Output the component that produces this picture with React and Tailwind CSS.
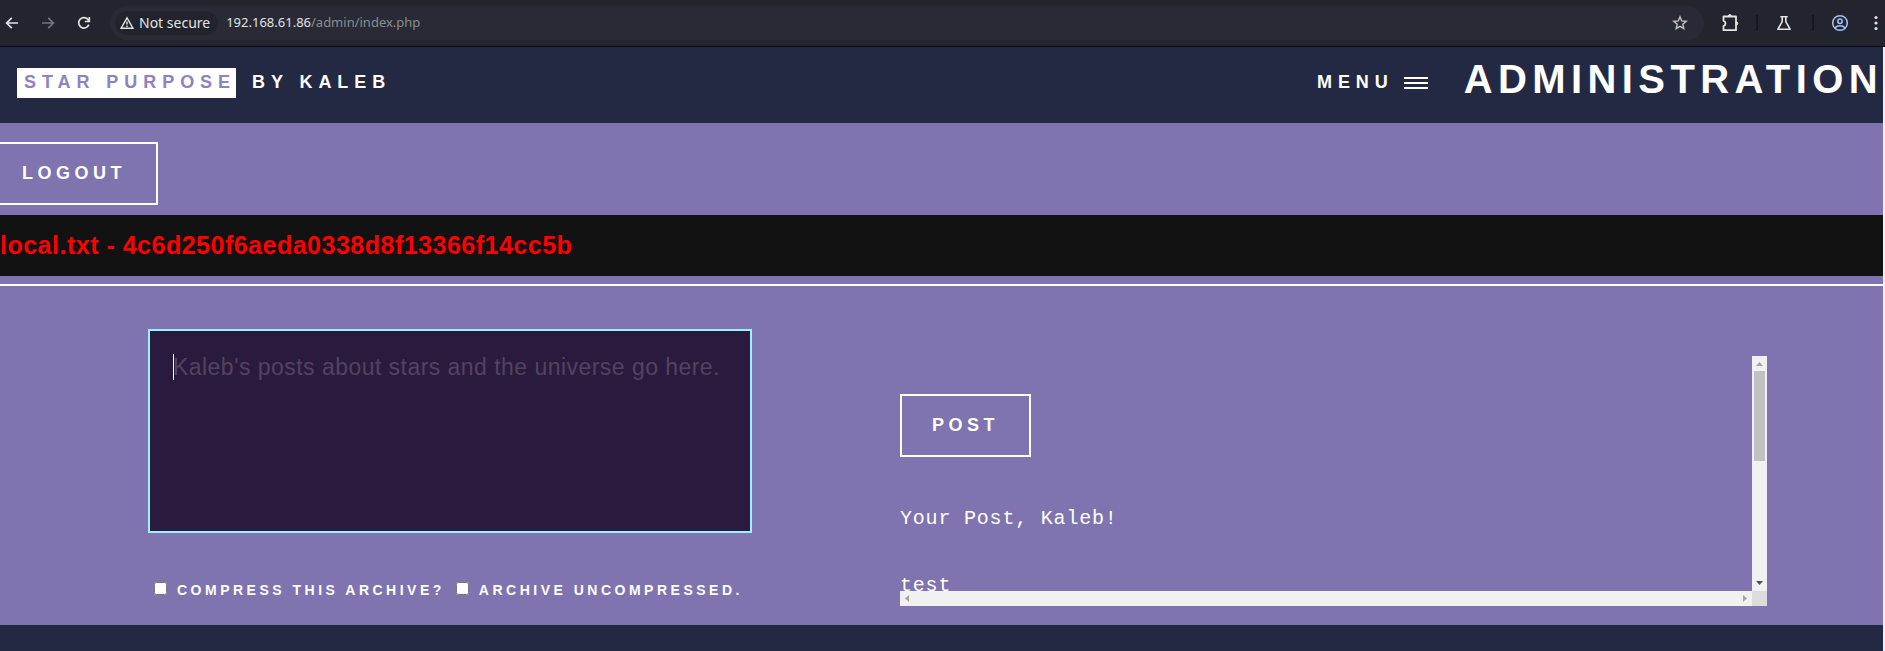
import { useState } from 'react';

const POSTS = ['Your Post, Kaleb!', 'test'];

function BackIcon({ flip }) {
  return (
    <svg viewBox="0 0 16 16" className="h-4 w-4" fill="none" stroke="currentColor" strokeWidth="1.7">
      <path d={flip ? 'M2 8h11M8.2 2.8 13.4 8l-5.2 5.2' : 'M14 8H3M7.8 2.8 2.6 8l5.2 5.2'} />
    </svg>
  );
}

function IconButton({ label, className = '', children }) {
  return (
    <button type="button" aria-label={label} className={`flex h-6 w-6 shrink-0 items-center justify-center ${className}`}>
      {children}
    </button>
  );
}

function BrowserBar() {
  return (
    <div className="flex h-[47px] items-center border-b border-[#0b0c10] bg-[#23252e] font-['Noto_Sans',sans-serif] text-[#e3e3e3]">
      <div className="flex items-center gap-3">
        <IconButton label="Back"><BackIcon /></IconButton>
        <IconButton label="Forward" className="text-[#73757c]"><BackIcon flip /></IconButton>
        <IconButton label="Reload">
          <svg viewBox="0 0 16 16" className="h-4 w-4" fill="none" stroke="currentColor" strokeWidth="1.7">
            <path d="M12.8 9.6A5.2 5.2 0 1 1 12.3 5l.9 1.2" />
            <path d="M13.3 2v4.5H8.8" />
          </svg>
        </IconButton>
      </div>
      <div className="ml-[14px] flex h-[34px] min-w-0 flex-1 items-center rounded-full bg-[#282a35] pl-[5px] pr-3">
        <button type="button" className="flex h-6 shrink-0 items-center gap-[5px] rounded-full bg-[#22242d] pl-[5px] pr-2 text-sm">
          <svg viewBox="0 0 14 14" className="h-[14px] w-[14px]" fill="none" stroke="currentColor" strokeWidth="1.4">
            <path d="M7 1.8 13 12.3H1z" />
            <path d="M7 5.4v3.2M7 9.6v1.4" />
          </svg>
          Not secure
        </button>
        <span className="ml-2 flex-1 truncate text-[13px]">
          192.168.61.86<span className="text-[#8b8d93]">/admin/index.php</span>
        </span>
        <IconButton label="Bookmark this tab" className="text-[#c4c5c8]">
          <svg viewBox="0 0 16 16" className="h-4 w-4" fill="none" stroke="currentColor" strokeWidth="1.4">
            <path d="m8 1.8 1.7 4.1 4.5.4-3.4 2.9 1 4.4L8 11.3l-3.8 2.3 1-4.4L1.800 6.300l4.500-.4z" />
          </svg>
        </IconButton>
      </div>
      <div className="flex items-center">
        <IconButton label="Extensions" className="ml-[14px]">
          <svg viewBox="0 0 18 18" className="h-[18px] w-[18px]" fill="none" stroke="currentColor" strokeWidth="1.8" strokeLinejoin="round">
            <path d="M2.500 2.500H15v13.700H2.500v-4.200a2.700 2.700 0 0 0 0-5.200z" />
            <path d="M7.200 2.200a1.600 1.600 0 0 1 3.200 0zM15.200 7.800a1.600 1.600 0 0 1 0 3.200z" fill="currentColor" strokeWidth="1" />
          </svg>
        </IconButton>
        <span className="ml-[14px] h-4 w-0.5 bg-[#17181e]" />
        <IconButton label="Labs" className="ml-[14px]">
          <svg viewBox="0 0 16 16" className="h-4 w-4" fill="none" stroke="currentColor" strokeWidth="1.600" strokeLinejoin="round">
            <path d="M4.300 1.800h7.400M6.200 2v4.600L1.900 14.200h12.200L9.800 6.600V2" />
          </svg>
        </IconButton>
        <span className="ml-4 h-4 w-0.5 bg-[#17181e]" />
        <IconButton label="Profile" className="ml-[14px] text-[#a3c2fb]">
          <svg viewBox="0 0 18 18" className="h-[18px] w-[18px]" fill="none" stroke="currentColor" strokeWidth="1.500">
            <circle cx="9" cy="9" r="7.300" />
            <circle cx="9" cy="7.300" r="2.200" />
            <path d="M3.800 14c1.300-1.400 3.100-2.200 5.200-2.200s3.900.8 5.200 2.200" />
          </svg>
        </IconButton>
        <IconButton label="Menu" className="ml-3 mr-[-3px]">
          <svg viewBox="0 0 16 16" className="h-4 w-4" fill="currentColor">
            <circle cx="8" cy="2.500" r="1.600" />
            <circle cx="8" cy="8" r="1.600" />
            <circle cx="8" cy="13.500" r="1.600" />
          </svg>
        </IconButton>
      </div>
    </div>
  );
}

function Header() {
  return (
    <header className="flex h-[76px] items-center justify-between bg-[#242943] pb-1 pl-[17px] font-bold uppercase text-white">
      <a href="#home" className="flex items-center gap-4 text-lg tracking-[0.33em]">
        <strong className="bg-white pb-0.5 pl-[7px] leading-7 text-[#8d82c4]">Star Purpose</strong>
        <span className="pb-0.5 leading-7">by Kaleb</span>
      </a>
      <div className="flex items-center gap-9">
        <a href="#menu" className="flex items-center gap-[10px] text-lg tracking-[0.33em]">
          <span className="pb-0.5 leading-7">Menu</span>
          <svg viewBox="0 0 24 12" className="h-3 w-6" fill="none" stroke="currentColor" strokeWidth="2">
            <path d="M0 1h24M0 6h24M0 11h24" />
          </svg>
        </a>
        <h1 className="pb-2 text-[40px] leading-[60px] tracking-[0.135em]">Administration</h1>
      </div>
    </header>
  );
}

function Option({ id, children }) {
  return (
    <div className="flex items-center gap-[10px]">
      <input id={id} type="checkbox" className="mb-0.5 h-[13px] w-[13px]" />
      <label htmlFor={id} className="pt-0.5 text-sm font-bold uppercase tracking-[0.25em]">{children}</label>
    </div>
  );
}

function PostPanel() {
  return (
    <section className="mt-[27px] grid h-[250px] min-w-0 grid-cols-[minmax(0,1fr)_15px] grid-rows-[minmax(0,1fr)_15px]">
      <div className="overflow-hidden pt-[38px]">
        <button type="submit" className="h-[63px] border-2 border-white px-[30px] pb-0.5 text-lg font-bold uppercase tracking-[0.25em]">Post</button>
        <div className="mt-7 font-['Liberation_Mono',monospace] text-xl leading-[67px] tracking-[0.04em]">
          {POSTS.map((line) => <p key={line}>{line}</p>)}
        </div>
      </div>
      <div className="flex flex-col items-center justify-between bg-[#f1f1f1]">
        <div>
          <svg viewBox="0 0 15 15" className="h-[15px] w-[15px]" fill="#a3a3a3"><path d="M4 10h7L7.500 6z" /></svg>
          <div className="mx-0.5 h-[90px] bg-[#c1c1c1]" />
        </div>
        <svg viewBox="0 0 15 15" className="h-[15px] w-[15px]" fill="#505050"><path d="M4 5h7L7.500 9z" /></svg>
      </div>
      <div className="flex justify-between bg-[#f1f1f1]">
        <svg viewBox="0 0 15 15" className="h-[15px] w-[15px]" fill="#a3a3a3"><path d="M9 4v7L5 7.500z" /></svg>
        <svg viewBox="0 0 15 15" className="h-[15px] w-[15px]" fill="#a3a3a3"><path d="M6 4v7l4-3.500z" /></svg>
      </div>
      <div className="bg-[#dcdcdc]" />
    </section>
  );
}

export default function App() {
  const [draft, setDraft] = useState('');
  return (
    <div className="flex min-h-screen flex-col bg-[#242943] font-['Liberation_Sans',Arial,sans-serif] text-white">
      <BrowserBar />
      <div className="flex flex-1 flex-col border-r-2 border-[#f1f1f1]">
        <Header />
        <main className="bg-[#7f74af]">
          <button type="button" className="mt-[19px] h-[63px] border-2 border-l-0 border-white pb-0.5 pl-[22px] pr-[30px] text-lg font-bold uppercase tracking-[0.25em]">Logout</button>
          <h3 className="mt-[10px] bg-[#121212] text-[25px] font-bold leading-[61px] tracking-[0.02em] text-[#ff0000]">
            local.txt - 4c6d250f6aeda0338d8f13366f14cc5b
          </h3>
          <hr className="mt-2 border-t-2 border-white" />
          <form className="grid grid-cols-[604fr_867fr] items-start gap-[148px] pb-[19px] pl-[148px] pr-[116px] pt-[43px]" onSubmit={(e) => e.preventDefault()}>
            <div className="min-w-0">
              <div className="relative">
                <textarea
                  aria-label="Post"
                  value={draft}
                  onChange={(e) => setDraft(e.target.value)}
                  placeholder="Kaleb's posts about stars and the universe go here."
                  className="block h-[204px] w-full resize-none border-2 border-[#9bf1ff] bg-[#2a1a3e] px-[23px] py-[17px] text-[23px] leading-[38px] tracking-[0.02em] text-white outline-none placeholder:text-[#524363]"
                />
                {draft === '' && <span className="absolute left-[25px] top-[25px] h-[26px] w-px bg-white" />}
              </div>
              <div className="mt-[45px] flex gap-[11px] whitespace-nowrap pl-[6px]">
                <Option id="compress">Compress this archive?</Option>
                <Option id="uncompressed">Archive uncompressed.</Option>
              </div>
            </div>
            <PostPanel />
          </form>
        </main>
      </div>
    </div>
  );
}
